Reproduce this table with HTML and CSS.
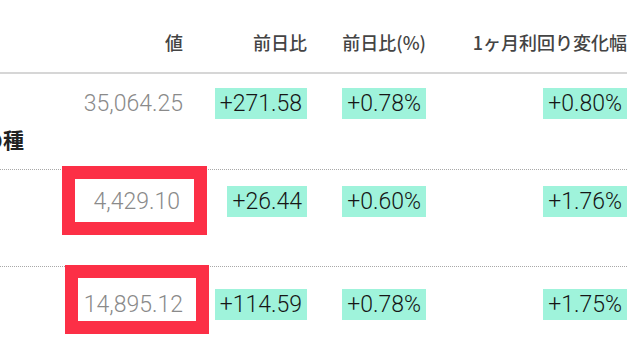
FILE: index.html
```html
<!DOCTYPE html>
<html lang="ja">
<head>
<meta charset="utf-8">
<link rel="stylesheet" href="styles.css">
</head>
<body>
<div class="table">
  <div class="row head">
    <div class="cell name"></div>
    <div class="cell">値</div>
    <div class="cell">前日比</div>
    <div class="cell">前日比(%)</div>
    <div class="cell">1ヶ月利回り変化幅</div>
  </div>
  <div class="row r1">
    <div class="cell name"><span class="label">の種</span></div>
    <div class="cell"><span class="val">35,064.25</span></div>
    <div class="cell"><span class="pill">+271.58</span></div>
    <div class="cell"><span class="pill">+0.78%</span></div>
    <div class="cell"><span class="pill">+0.80%</span></div>
  </div>
  <div class="row r2">
    <div class="cell name"></div>
    <div class="cell"><span class="val hl hl-a">4,429.10</span></div>
    <div class="cell"><span class="pill">+26.44</span></div>
    <div class="cell"><span class="pill">+0.60%</span></div>
    <div class="cell"><span class="pill">+1.76%</span></div>
  </div>
  <div class="row r3">
    <div class="cell name"></div>
    <div class="cell"><span class="val hl hl-b">14,895.12</span></div>
    <div class="cell"><span class="pill">+114.59</span></div>
    <div class="cell"><span class="pill">+0.78%</span></div>
    <div class="cell"><span class="pill">+1.75%</span></div>
  </div>
</div>
</body>
</html>
```
FILE: styles.css
```css
html, body {
  margin: 0;
  padding: 0;
  background: #fff;
  overflow: hidden;
}
body {
  width: 640px;
  height: 360px;
  font-family: Roboto, "Noto Sans CJK JP", sans-serif;
}
.table {
  padding-right: 13px;
}
.row {
  display: grid;
  grid-template-columns: 80px 103px 124px 119px 201px;
  align-items: start;
  box-sizing: border-box;
}
.cell {
  justify-self: end;
}
.cell.name {
  justify-self: start;
}
.head {
  height: 74px;
  padding-top: 29px;
  border-bottom: 2px solid #d6d6d6;
  font-family: "Noto Sans CJK JP", sans-serif;
  font-size: 18px;
  line-height: 26px;
  font-weight: 500;
  color: #444;
}
.r1 {
  height: 96px;
  padding-top: 14px;
  border-bottom: 1px dotted #a8a8a8;
}
.r2 {
  height: 97px;
  padding-top: 16px;
  border-bottom: 1px dotted #a8a8a8;
}
.r3 {
  height: 94px;
  padding-top: 22px;
}
.label {
  display: block;
  margin-top: 37px;
  margin-left: -18px;
  font-family: "Noto Sans CJK JP", sans-serif;
  font-size: 21px;
  line-height: 28px;
  font-weight: 700;
  color: #222;
  white-space: nowrap;
}
.val {
  display: inline-block;
  font-size: 23px;
  line-height: 31px;
  font-weight: 300;
  color: #8a8a8a;
}
.pill {
  display: inline-block;
  padding: 0 5px;
  background: #9ff3db;
  font-size: 23px;
  line-height: 31px;
  font-weight: 300;
  color: #161616;
}
.hl {
  box-sizing: border-box;
  text-align: right;
  border: 13px solid #fc2f46;
  background: #fff;
}
.hl-a {
  width: 145px;
  padding: 7px 14px 5px 0;
  margin: -20px -24px -18px 0;
}
.hl-b {
  width: 144px;
  padding: 11px 13px 1px 0;
  margin: -24px -26px -14px 0;
}
```
